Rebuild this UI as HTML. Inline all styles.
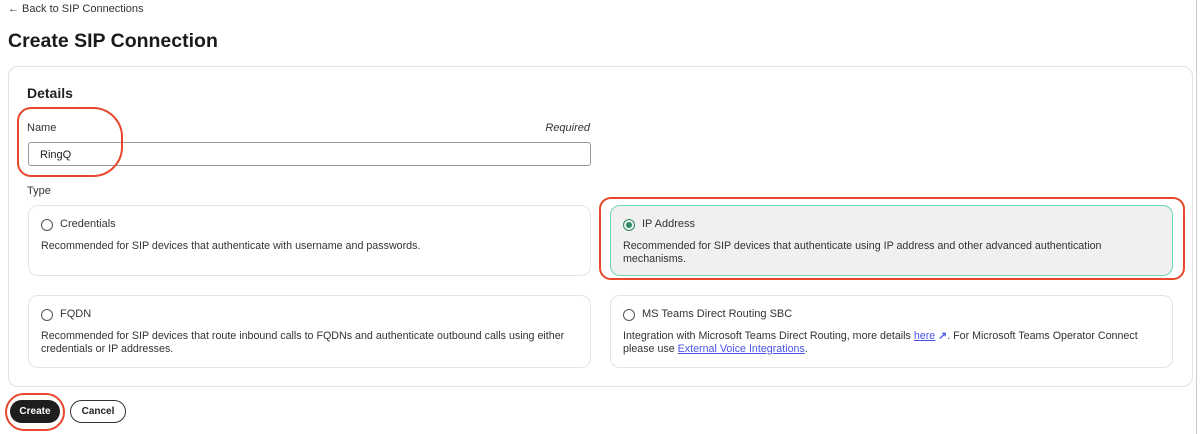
<!DOCTYPE html>
<html><head><style>
*{box-sizing:border-box;margin:0;padding:0}
body{width:1202px;height:434px;background:#fff;font-family:"Liberation Sans",sans-serif;color:#222;position:relative;overflow:hidden}
.abs{position:absolute}
.back{left:8px;top:3px;font-size:11px;color:#333}
h1{position:absolute;left:8px;top:30px;font-size:19.5px;font-weight:bold;color:#1a1a1a}
.outer{left:8px;top:66px;width:1185px;height:321px;border:1px solid #e2e2e2;border-radius:10px}
.det{left:27px;top:85px;font-size:14px;font-weight:bold}
.lbl{font-size:11px;color:#333}
.input{left:28px;top:142px;width:563px;height:24px;border:1px solid #999;border-radius:3px;font-size:11px;padding:6px 11px}
.card{border:1px solid #e4e4e4;border-radius:10px;width:563px;padding:12px 12px;font-size:10.7px;color:#333;line-height:13px}
.card .d{max-width:485px}
.card .t{font-size:11px;margin-bottom:9px;display:flex;align-items:center}
.radio{width:12px;height:12px;border:1px solid #555;border-radius:50%;margin-right:7px;display:inline-block;position:relative}
.sel{background:#f0f0f0;border:1px solid #6ddaa8}
.sel .radio{border-color:#2e8b63}
.sel .radio:after{content:"";position:absolute;left:2px;top:2px;width:6px;height:6px;border-radius:50%;background:#2e8b63}
a{color:#4a55e8;text-decoration:underline}
.red{border:2px solid #e8472c}
.btn{top:400px;height:23px;border-radius:12px;font-size:10px;font-weight:bold;display:flex;align-items:center;justify-content:center}
</style></head><body>
<div class="abs back">← Back to SIP Connections</div>
<h1>Create SIP Connection</h1>
<div class="abs outer"></div>
<div class="abs det">Details</div>
<div class="abs lbl" style="left:27px;top:122px">Name</div>
<div class="abs lbl" style="left:520px;top:122px;width:70px;text-align:right;font-style:italic">Required</div>
<div class="abs input">RingQ</div>
<div class="abs red" style="left:17px;top:107px;width:106px;height:70px;border-radius:14px 30px 30px 14px"></div>
<div class="abs lbl" style="left:27px;top:185px">Type</div>
<div class="abs card" style="left:28px;top:205px;height:71px"><div class="t"><span class="radio"></span>Credentials</div><div class="d">Recommended for SIP devices that authenticate with username and passwords.</div></div>
<div class="abs card sel" style="left:610px;top:205px;height:71px"><div class="t"><span class="radio"></span>IP Address</div><div class="d">Recommended for SIP devices that authenticate using IP address and other advanced authentication mechanisms.</div></div>
<div class="abs red" style="left:599px;top:197px;width:586px;height:83px;border-radius:12px"></div>
<div class="abs card" style="left:28px;top:295px;height:73px"><div class="t"><span class="radio"></span>FQDN</div><div class="d" style="max-width:536px">Recommended for SIP devices that route inbound calls to FQDNs and authenticate outbound calls using either credentials or IP addresses.</div></div>
<div class="abs card" style="left:610px;top:295px;height:73px"><div class="t"><span class="radio"></span>MS Teams Direct Routing SBC</div><div class="d" style="max-width:535px">Integration with Microsoft Teams Direct Routing, more details <a>here</a> <span style="color:#4a55e8;font-weight:bold">↗</span>. For Microsoft Teams Operator Connect please use <a>External Voice Integrations</a>.</div></div>
<div class="abs btn" style="left:10px;width:50px;background:#1e1e1e;color:#fff">Create</div>
<div class="abs red" style="left:5px;top:393px;width:60px;height:38px;border-radius:19px"></div>
<div class="abs btn" style="left:70px;width:56px;border:1px solid #333;color:#222;background:#fff">Cancel</div>
<div class="abs" style="left:1196px;top:0;width:1px;height:434px;background:#ccc"></div>
</body></html>
